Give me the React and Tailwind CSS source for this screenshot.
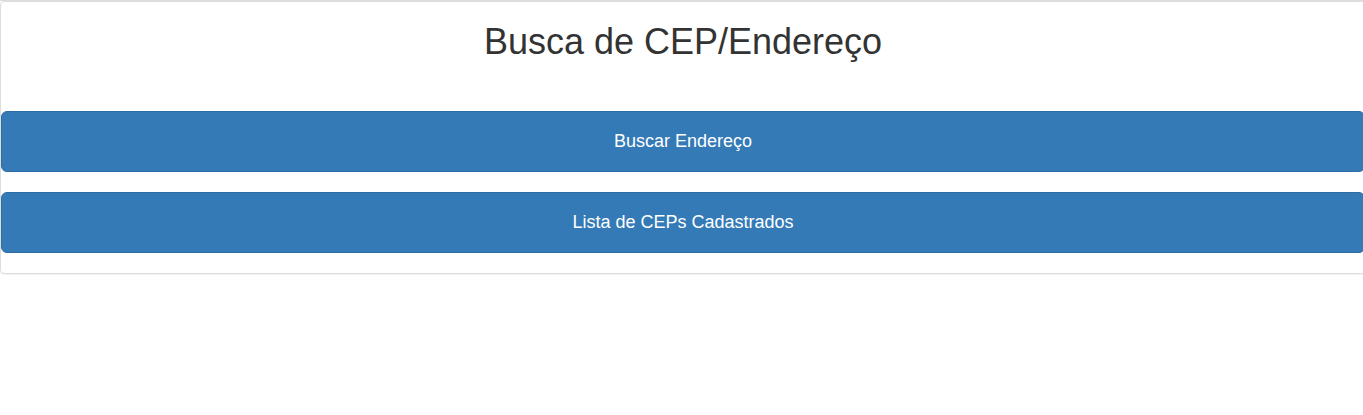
const actions = ["Buscar Endereço", "Lista de CEPs Cadastrados"];

export default function App() {
  return (
    <main className="overflow-x-hidden border-t border-[#dddddd] bg-white pb-5 font-['Liberation_Sans',Arial,sans-serif]">
      <section className="-mr-[3px] rounded border border-[#dddddd] pb-5 text-center shadow-[0_1px_1px_rgba(0,0,0,0.05)]">
        <h1 className="mt-5 mb-[49px] text-4xl leading-10 text-[#333333]">Busca de CEP/Endereço</h1>
        <div className="flex flex-col gap-5">
          {actions.map((label) => (
            <button
              key={label}
              type="button"
              className="w-full cursor-pointer rounded-md border border-[#2e6da4] bg-[#337ab7] py-4 text-lg leading-[27px] text-white hover:bg-[#286090]"
            >
              {label}
            </button>
          ))}
        </div>
      </section>
    </main>
  );
}
